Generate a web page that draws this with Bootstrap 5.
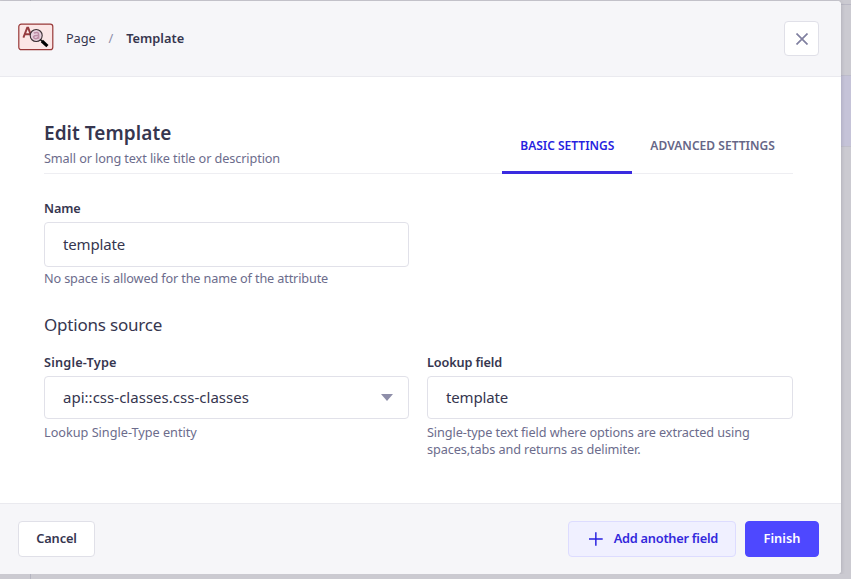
<!DOCTYPE html>
<html lang="en">
<head>
<meta charset="utf-8">
<title>Edit Template</title>
<link href="https://cdn.jsdelivr.net/npm/bootstrap@5.3.0/dist/css/bootstrap.min.css" rel="stylesheet">
<style>
body{font-family:"Noto Sans",sans-serif;background:#cbcad1;color:#36364f;width:851px;height:579px;overflow:hidden;position:relative}
.page-row{position:absolute;right:0;top:75px;width:12px;height:72px;background:#c5c3d8;border-top:1px solid #bdbccb;border-bottom:1px solid #c0bfca}
.page-line{position:absolute;left:30px;top:0;width:1px;height:579px;background:#b5b5c1}
.page-top{position:absolute;right:0;top:4px;width:12px;height:1px;background:#b9b8c4}
.dialog-box{position:relative;width:841px;height:573px;margin-top:1px;background:#fff;border-radius:0 4px 4px 0;box-shadow:0 1px 4px rgba(33,33,52,.2);overflow:hidden}
.dialog-head{height:76px;background:#f6f6f9;border-bottom:1px solid #eaeaef;padding:0 22px 0 18px}
.dialog-body{height:426px;padding:43px 48px 0 44px}
.dialog-foot{height:71px;background:#f6f6f9;border-top:1px solid #eaeaef;padding:0 22px 0 18px}
.type-icon{margin-top:-3px}
.crumb-text{font-size:12.8px;margin-left:12px;letter-spacing:-.12px}
.crumb-sep{color:#8e8ea9;margin-left:13px}
.crumb-now{margin-left:13px;font-weight:600;letter-spacing:0}
.close-btn{width:35px;height:35px;background:#fff;border:1px solid #e0e0e8;border-radius:4px}
.title-row{height:54px;border-bottom:1px solid #eeeef2}
.title-text{font-size:19px;line-height:26px;font-weight:600;margin:0 0 4px;letter-spacing:.06px}
.hint{font-size:12.7px;line-height:17px;color:#6c6c8c;letter-spacing:-.11px;margin-top:5px}
.title-text + .hint{margin-top:0}
.hint-a{letter-spacing:-.145px;margin-top:3px}
.hint-b{letter-spacing:-.01px}
.hint-c{letter-spacing:-.1px}
.tab-item{height:54px;font-size:12px;font-weight:600;line-height:52px;color:#666687;padding:0 18px;white-space:nowrap;letter-spacing:.03px}
.tab-item.active{color:#271fe0;border-bottom:3px solid #3a2be0;letter-spacing:-.01px}
.field-label{font-size:12.7px;line-height:18px;font-weight:600;display:block;letter-spacing:-.13px}
.label-type{letter-spacing:.2px}
.field-box{height:45px;border:1px solid #e1e1e9;border-radius:4px;padding:0 15px 0 18px;font-size:15px;background:#fff;letter-spacing:-.15px;margin-top:5px}
.field-box.short{height:43px}
.picked{letter-spacing:.02px}
.section-title{font-size:17px;line-height:24px;font-weight:400;letter-spacing:-.2px;margin-top:26px}
.cols{display:grid;grid-template-columns:365px 366px;column-gap:18px}
.cols-name{margin-top:25px}
.cols-source{margin-top:16px}
.act{height:36px;border-radius:4px;font-size:12.8px;font-weight:600;padding:0 17px 1px;border:1px solid #e0e0e8;background:#fff;color:#36364f;white-space:nowrap}
.act-cancel{width:77px;letter-spacing:-.15px}
.act-add{width:168px;padding-left:20px;background:#f0f0ff;border-color:#dddcff;color:#3328dc;letter-spacing:-.26px}
.act-add svg{margin-right:11px}
.act-go{width:74px;margin-left:9px;background:#4e48ff;border-color:#4e48ff;color:#fff}
</style>
<script src="https://cdn.jsdelivr.net/npm/bootstrap@5.3.0/dist/js/bootstrap.bundle.min.js"></script>
</head>
<body>
<div class="page-line"></div><div class="page-row"></div><div class="page-top"></div>
<div class="overflow-hidden">
<div class="dialog-box">
  <div class="dialog-head d-flex align-items-center">
    <svg class="type-icon" width="36" height="28" viewBox="0 0 36 28">
      <rect x=".8" y="1.1" width="34" height="25.6" rx="2.5" fill="#fbe6e6" stroke="#983838" stroke-width="1.2"/>
      <path d="M5.4 14.6L9.2 4.8h1l3.7 9.8M6.6 11.3h6" fill="none" stroke="#963c40" stroke-width="1.9"/>
      <circle cx="18.2" cy="12.5" r="6" fill="#e6d0dd" stroke="#3c3035" stroke-width="1.1"/>
      <path d="M15.8 10.1q4.8-1.7 4.8 1.4v4.2m0-3.2q-5.2-.3-5 1.7c.3 2 3.8 2 5-.2" fill="none" stroke="#bd8da6" stroke-width="1.6"/>
      <path d="M22.4 16.5l2 2" stroke="#111" stroke-width="1.5"/><path d="M23.9 18l5.5 5.1" stroke="#000" stroke-width="3.2"/>
    </svg>
    <span class="crumb-text">Page</span><span class="crumb-text crumb-sep">/</span><span class="crumb-text crumb-now">Template</span>
    <button class="close-btn ms-auto p-0 d-flex align-items-center justify-content-center" aria-label="Close"><svg width="12" height="12" viewBox="0 0 12 12"><path d="M.5.5l11 11M11.5.5L.5 11.5" stroke="#8080a0" stroke-width="1.7"/></svg></button>
  </div>
  <div class="dialog-body">
    <div class="title-row d-flex justify-content-between">
      <div><h2 class="title-text">Edit Template</h2><div class="hint">Small or long text like title or description</div></div>
      <div class="d-flex"><div class="tab-item active">BASIC SETTINGS</div><div class="tab-item">ADVANCED SETTINGS</div></div>
    </div>
    <div class="cols cols-name"><div>
      <label class="field-label">Name</label>
      <div class="field-box d-flex align-items-center">template</div>
      <div class="hint hint-a">No space is allowed for the name of the attribute</div>
    </div></div>
    <div class="section-title">Options source</div>
    <div class="cols cols-source">
      <div><label class="field-label label-type">Single-Type</label>
      <div class="field-box short d-flex align-items-center justify-content-between"><span class="picked">api::css-classes.css-classes</span><svg width="12" height="7" viewBox="0 0 12 7"><path d="M0 0h12L6 7z" fill="#8e8ea9"/></svg></div>
      <div class="hint hint-b">Lookup Single-Type entity</div></div>
      <div><label class="field-label">Lookup field</label>
      <div class="field-box short d-flex align-items-center">template</div>
      <div class="hint hint-c">Single-type text field where options are extracted using spaces,tabs and returns as delimiter.</div></div>
    </div>
  </div>
  <div class="dialog-foot d-flex align-items-center">
    <button class="act act-cancel px-0">Cancel</button>
    <button class="act act-add ms-auto d-flex align-items-center"><svg width="14" height="14" viewBox="0 0 14 14"><path d="M7 0v14M0 7h14" stroke="#271fe0" stroke-width="1.5"/></svg>Add another field</button>
    <button class="act act-go px-0">Finish</button>
  </div>
</div>
</div>
</body>
</html>
